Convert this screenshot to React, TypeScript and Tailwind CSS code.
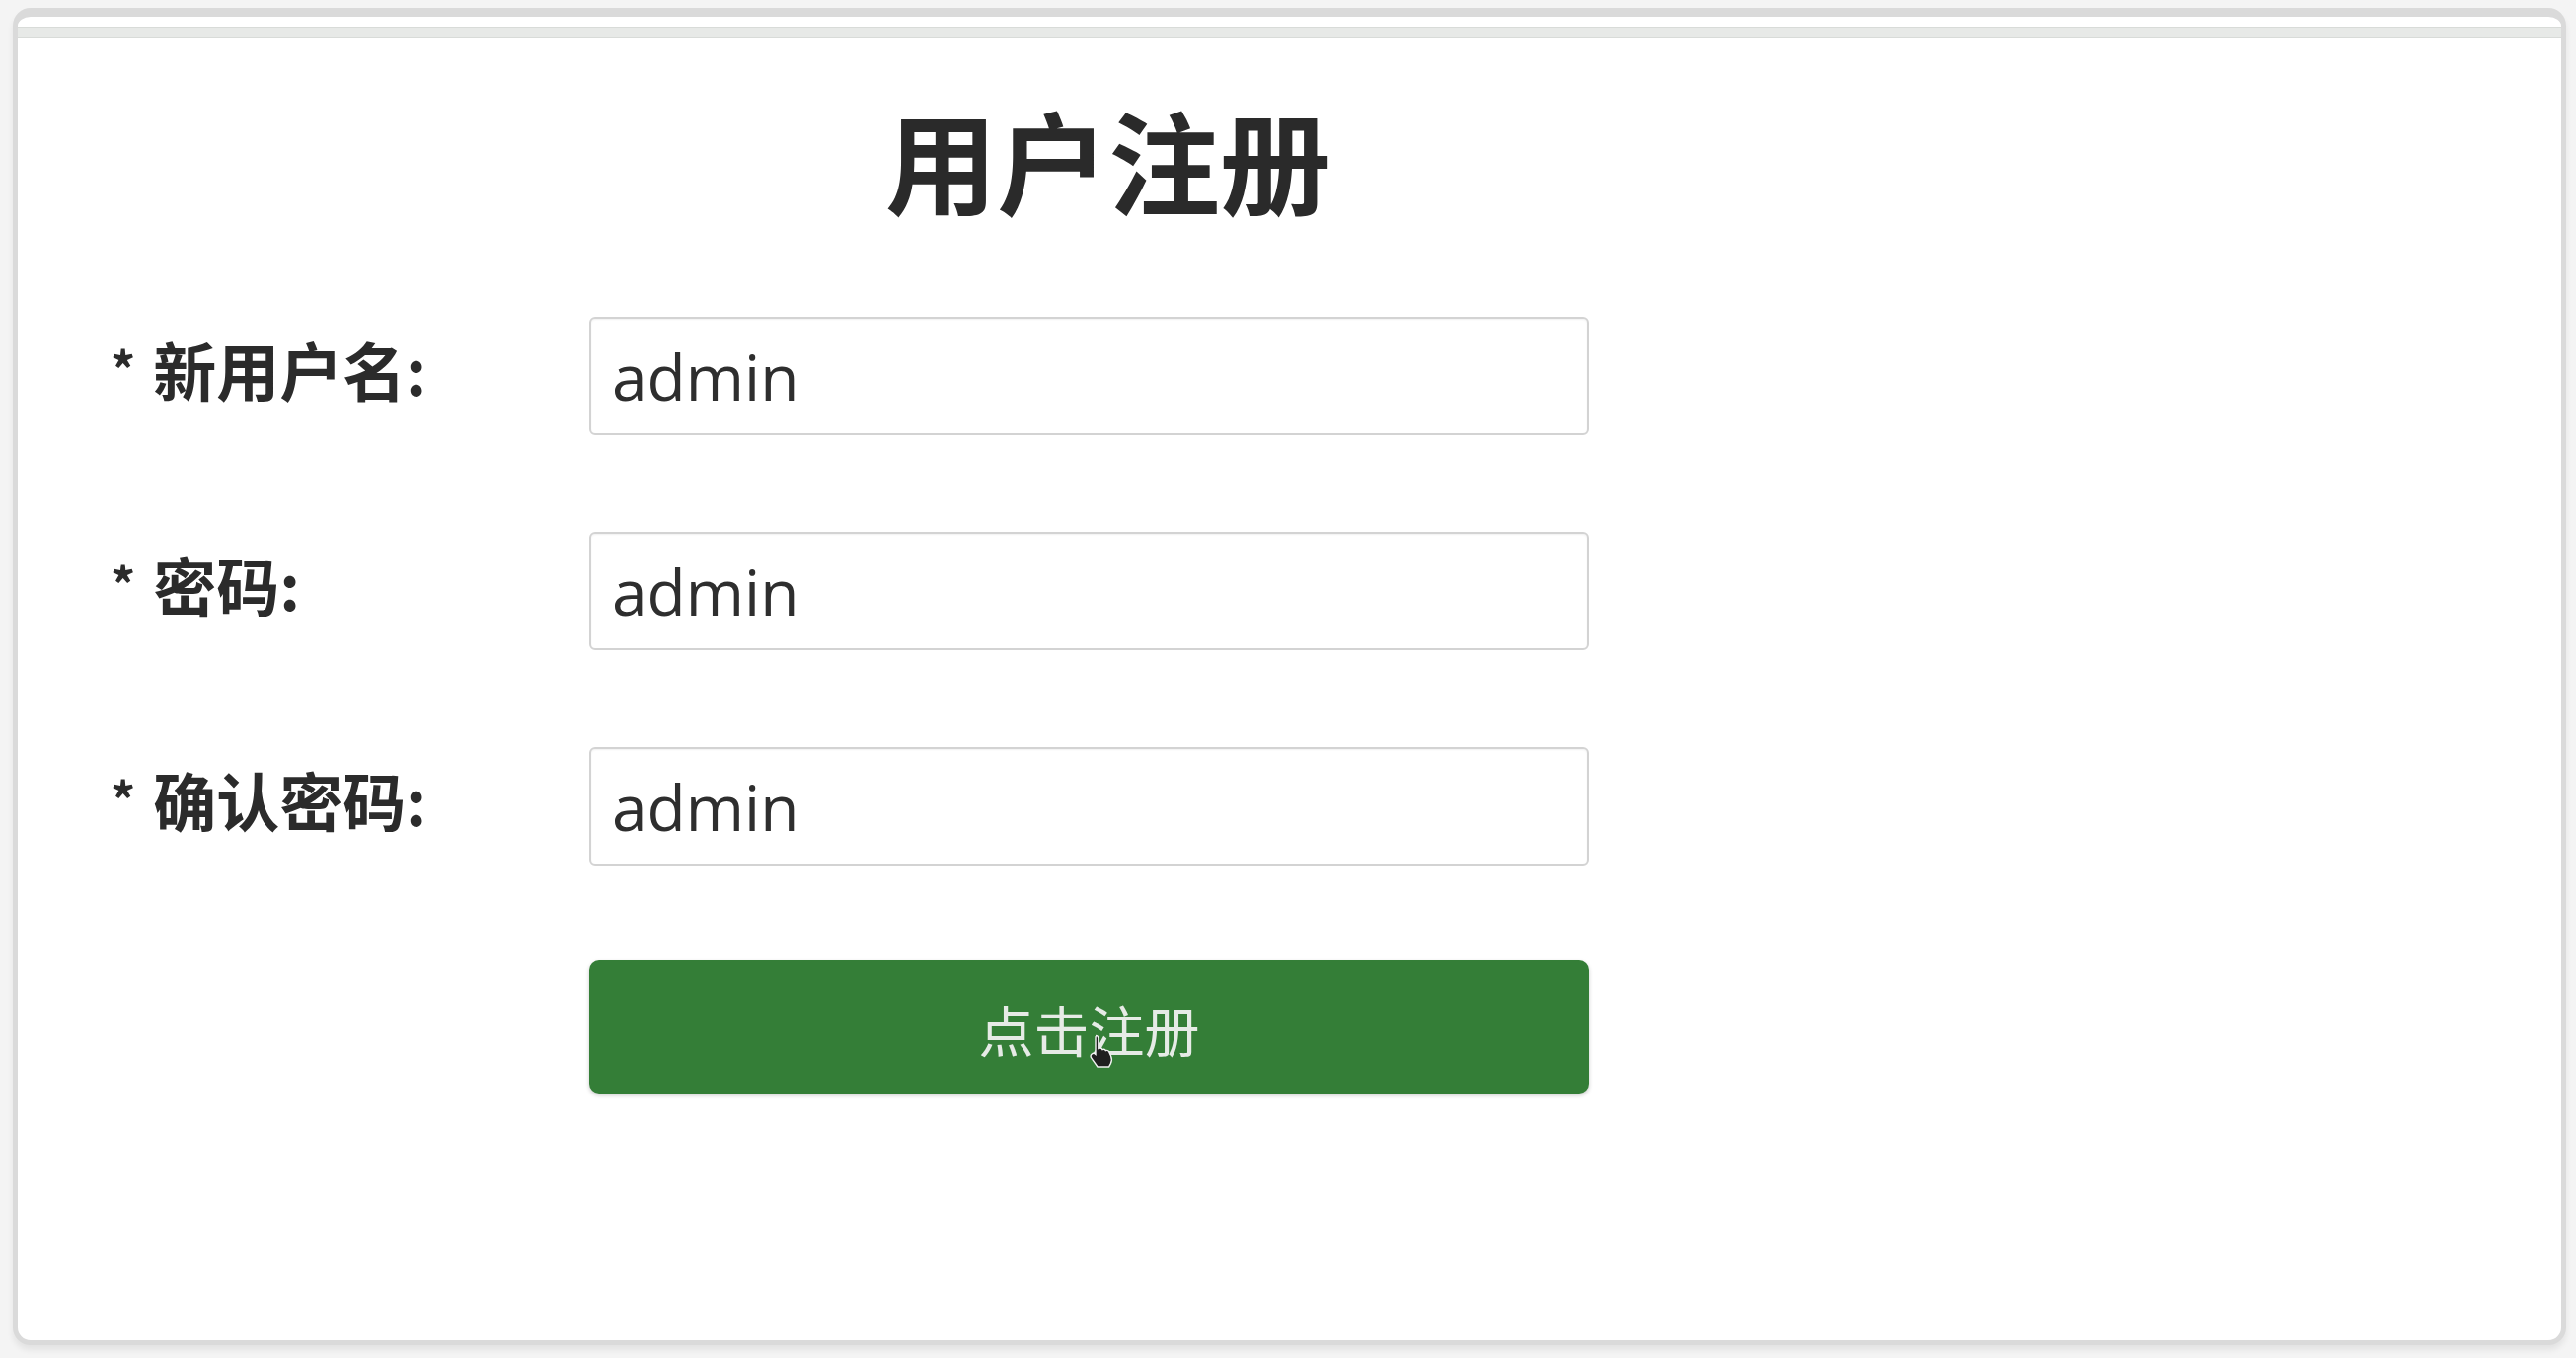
const fields = [
  { label: '新用户名', value: 'admin', type: 'text' },
  { label: '密码', value: 'admin', type: 'text' },
  { label: '确认密码', value: 'admin', type: 'text' },
]

const cjk = 'font-["Noto_Sans_CJK_SC","Noto_Sans",sans-serif]'

function HandCursor() {
  return (
    <svg className="absolute left-[1084px] top-[1030px] h-[36px] w-[32px]" viewBox="0 0 16 18" aria-hidden="true">
      <path
        d="M4 1.2c.8 0 1.4.6 1.4 1.4v5.2l.3-.1c.7-.3 1.5 0 1.8.6.6-.3 1.4-.1 1.7.5.6-.2 1.4 0 1.7.7l.9 2c.5 1.2.5 2.6-.1 3.8L10.8 17H5l-3.2-4.6c-.5-.7-.3-1.6.4-2 .6-.4 1.3-.2 1.8.3V2.6c0-.8.2-1.4 0-1.4z"
        fill="#1f1f1f"
        stroke="#f2f2f2"
        strokeWidth="0.7"
      />
    </svg>
  )
}

export default function App() {
  return (
    <div className="min-h-screen bg-[#f4f4f4] pl-[13px] pt-[8px]">
      <div className="relative h-[1355px] w-[2587px] overflow-hidden rounded-[18px] border-[5px] border-t-[9px] border-[#dadada] bg-white shadow-[0_5px_6px_rgba(0,0,0,0.07)]">
        <div className="h-[10px]" />
        <div className="h-[11px] border-y border-[#d8dbd8] bg-[#e7e9e7]" />

        <div className="ml-[94px] w-[2022px]">
          <h1 className={`mt-[66px] text-center text-[113px] font-bold leading-none text-[#2a2a2a] ${cjk}`}>用户注册</h1>

          <form className="mt-[104px] flex flex-col gap-[98px]" onSubmit={(e) => e.preventDefault()}>
            {fields.map((f) => (
              <div key={f.label} className="flex items-start">
                <label className={`mt-[20px] flex w-[485px] items-start text-[64px] font-bold leading-none text-[#2b2b2b] ${cjk}`}>
                  <span className="mr-[18px] mt-[6px] text-[50px]">*</span>
                  <span>{f.label}:</span>
                </label>
                <input
                  type={f.type}
                  value={f.value}
                  readOnly
                  className='h-[120px] w-[1013px] rounded-[6px] border-2 border-[#d3d3d3] bg-white px-[21px] font-["Open_Sans",sans-serif] text-[64px] text-[#2e2e2e] shadow-[inset_0_1px_2px_rgba(0,0,0,0.06)] outline-none'
                />
              </div>
            ))}

            <div className="-mt-[2px] flex">
              <div className="w-[485px]" />
              <button
                type="submit"
                className={`h-[135px] w-[1013px] rounded-[10px] bg-[#347e37] pt-[2px] text-[56px] leading-none text-[#e6ebe6] shadow-[0_2px_4px_rgba(0,0,0,0.2)] ${cjk}`}
              >
                点击注册
              </button>
            </div>
          </form>
        </div>

        <HandCursor />
      </div>
    </div>
  )
}
